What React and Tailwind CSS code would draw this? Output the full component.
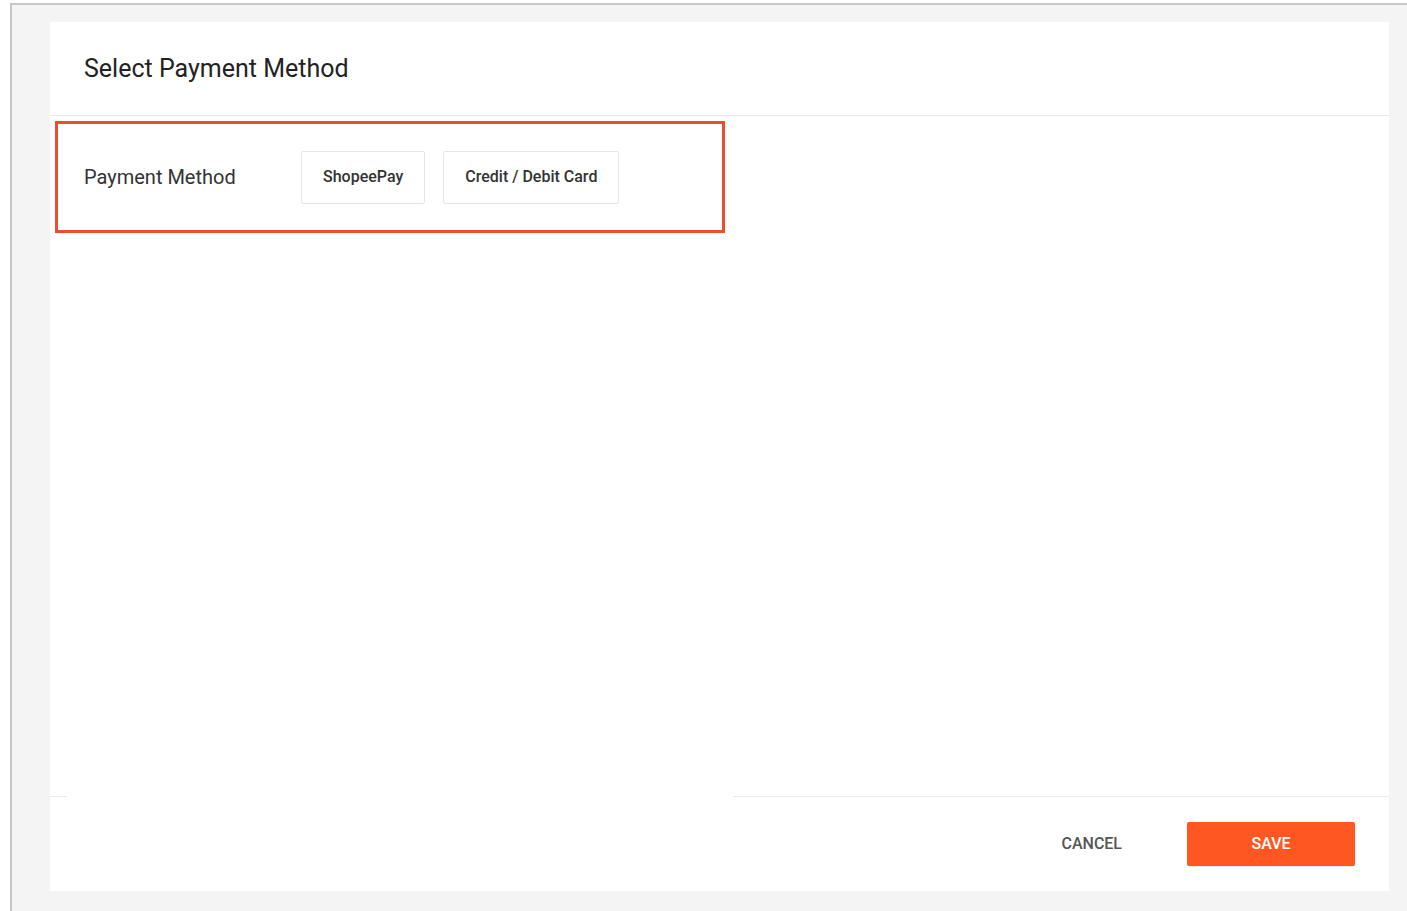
import React, { useState } from 'react';

const methods = ['ShopeePay', 'Credit / Debit Card'];

const PaymentMethodModal = () => {
  const [selected, setSelected] = useState(null);

  return (
    <div className="w-[1339px] h-[869px] bg-white flex flex-col">
      {/* Header */}
      <div className="h-[94px] flex items-center px-[34px] border-b border-[#e8e8e8]">
        <h2 className="text-[25px] text-[#222]">Select Payment Method</h2>
      </div>

      {/* Body */}
      <div className="flex-1 pt-[5px] pl-[5px]">
        <div className="w-[670px] h-[112px] border-[3px] border-[#ee4d2d] flex items-center pl-[26px]">
          <span className="w-[217px] text-[20px] text-[#333]">Payment Method</span>
          <div className="flex gap-[18px]">
            {methods.map((m) => (
              <button
                key={m}
                onClick={() => setSelected(m)}
                className={
                  'h-[53px] px-[21px] border rounded-[2px] text-[16px] font-medium text-[#333] ' +
                  (selected === m ? 'border-[#ee4d2d]' : 'border-[#e5e5e5]')
                }
              >
                {m}
              </button>
            ))}
          </div>
        </div>
      </div>

      {/* Footer */}
      <div className="h-[95px] flex flex-col">
        <div className="flex h-px">
          <div className="w-[17px] bg-[#ebebeb]" />
          <div className="w-[666px]" />
          <div className="flex-1 bg-[#ebebeb]" />
        </div>
        <div className="flex-1 flex items-center justify-end pr-[34px]">
          <button className="h-[44px] px-[24px] text-[16px] font-medium text-[#555] mr-[41px]">
            CANCEL
          </button>
          <button className="w-[168px] h-[44px] bg-[#fe5722] rounded-[2px] text-[16px] font-medium text-white shadow-[0_1px_1px_rgba(0,0,0,0.09)]">
            SAVE
          </button>
        </div>
      </div>
    </div>
  );
};

export default function App() {
  return (
    <div className="min-h-[911px] bg-white pt-[3px] pl-[10px] font-['Roboto',sans-serif]">
      <div className="min-h-[908px] bg-[#f4f4f4] border-t-2 border-l-2 border-[#c6c6c6] pt-[17px] pl-[38px]">
        <PaymentMethodModal />
      </div>
    </div>
  );
}
